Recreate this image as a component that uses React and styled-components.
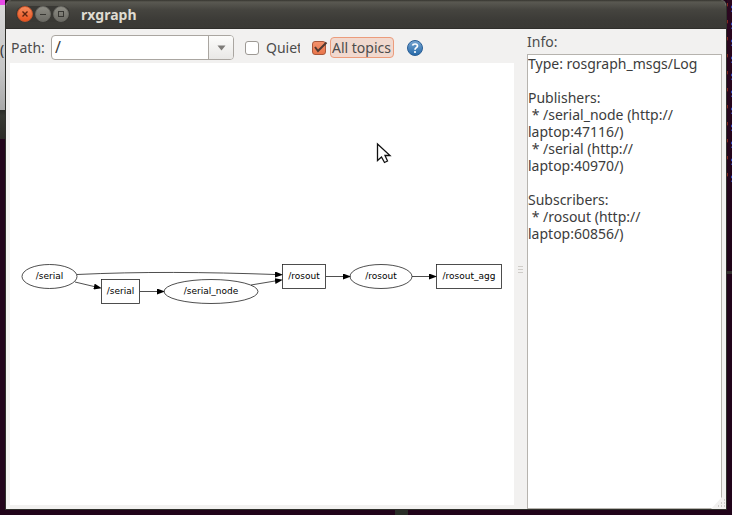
import React, { useState } from "react";
import styled, { createGlobalStyle, css } from "styled-components";

const Global = createGlobalStyle`
  *, *::before, *::after { box-sizing: border-box; }
  body {
    margin: 0;
    background: #21041a;
    color: #4c4c4c;
    font: 14px/17px "Noto Sans", "Open Sans", sans-serif;
  }
`;

const Desktop = styled.div`
  display: grid;
  grid-template-columns: 5px minmax(0, 1fr) 5px;
  grid-template-rows: minmax(0, 1fr) 5px;
  height: 100vh;
  overflow: hidden;
`;

const LeftEdge = styled.div`
  overflow: hidden;
  display: flex;
  flex-direction: column;
`;

const GreyPanel = styled.div`
  height: 110px;
  padding-top: 36px;
  background: linear-gradient(#d8d8d8, #c6c6c6 60%, #a8a8a8);
  border-top: 5px solid #e64be6;
  color: #333;
`;

const DarkPanel = styled.div`
  height: 29px;
  background: linear-gradient(#2a2b26, #363731 20%, #2b2a26);
`;

const Terminal = styled.div`
  overflow: hidden;
  background: linear-gradient(#2b0720, #1f0318 271px, #33302e 271px, #33302e 274px, #21041a 274px);
  color: #86b0ea;
  font: 12px/17px "DejaVu Sans Mono", monospace;
  white-space: pre;
`;

const TerminalLine = styled.div`
  margin-left: -4px;
`;

const Quote = styled.span`
  color: #d9a066;
`;

const BottomEdge = styled.div`
  grid-column: 1 / -1;
  display: flex;
  justify-content: center;
  padding-left: 70px;
`;

const BottomBlock = styled.div`
  width: 13px;
  background: #292d27;
`;

const Window = styled.main`
  display: flex;
  flex-direction: column;
  min-width: 0;
  background: #f2f1f0;
  border: 1px solid #2f302b;
  border-top: 0;
  border-radius: 6px 6px 0 0;
  overflow: hidden;
`;

const TitleBar = styled.header`
  flex: none;
  display: flex;
  align-items: center;
  gap: 11px;
  height: 29px;
  padding-left: 10px;
  background: linear-gradient(#35342f, #5a5952 2px, #45443f 10px, #3c3b37 20px, #3a3935);
  border-bottom: 1px solid #2f2e2b;
`;

const WindowControls = styled.div`
  display: flex;
  gap: 2px;
  padding: 0 1px;
  border-radius: 9px;
  background: #393834;
`;

const WindowButton = styled.button`
  display: flex;
  width: 16px;
  height: 16px;
  padding: 0;
  border: 1px solid ${(p) => (p.$close ? "#c9552b" : "#6b6a64")};
  border-radius: 50%;
  background: ${(p) =>
    p.$close ? "linear-gradient(#f58a5c, #e95420)" : "linear-gradient(#8d8c84, #6c6b65)"};
  color: ${(p) => (p.$close ? "#5b2410" : "#383733")};
`;

const Title = styled.h1`
  margin: 0;
  color: #dfdbd2;
  font-size: 14px;
  line-height: 17px;
  font-weight: 700;
`;

const Content = styled.div`
  flex: 1;
  min-height: 0;
  display: grid;
  grid-template-columns: minmax(0, 1fr) 13px minmax(0, 199px);
`;

const GraphPane = styled.section`
  display: flex;
  flex-direction: column;
  min-width: 0;
  padding: 0 0 4px 4px;
`;

const Toolbar = styled.form`
  flex: none;
  display: flex;
  align-items: center;
  height: 34px;
  padding: 4px 0 1px 1px;
`;

const PathLabel = styled.label`
  width: 40px;
`;

const ComboBox = styled.div`
  display: flex;
  width: 183px;
  height: 25px;
  border: 1px solid #aaa6a1;
  border-radius: 4px;
  overflow: hidden;
  background: #fff;
`;

const PathInput = styled.input`
  flex: 1;
  min-width: 0;
  padding: 0 3px;
  border: 0;
  outline: 0;
  background: transparent;
  color: #3c3c3c;
  font: inherit;
  font-size: 16px;
`;

const ComboButton = styled.button`
  display: flex;
  align-items: center;
  justify-content: center;
  width: 25px;
  padding: 0;
  border: 0;
  border-left: 1px solid #aaa6a1;
  background: linear-gradient(#fcfcfb, #e9e8e6);
`;

const CheckLabel = styled.label`
  display: flex;
  align-items: center;
  gap: ${(p) => (p.$focused ? 3 : 4)}px;
  margin-left: 10px;
`;

const CheckBox = styled.span`
  display: grid;
  width: 16px;
  height: 16px;

  & > * {
    grid-area: 1 / 1;
  }
`;

const CheckInput = styled.input`
  appearance: none;
  width: 14px;
  height: 14px;
  margin: 1px;
  border: 1px solid #9d9994;
  border-radius: 3px;
  background: #fff;

  &:checked {
    border-color: #a9583b;
    background: linear-gradient(#f4926c, #e9764c);
  }
`;

const CheckMark = styled.svg`
  pointer-events: none;
  overflow: visible;
`;

const CheckText = styled.span`
  width: ${(p) => p.$width}px;
  height: 21px;
  line-height: 19px;
  border: 1px solid transparent;
  border-radius: 4px;
  padding-left: 1px;
  overflow: hidden;
  white-space: nowrap;
  ${(p) =>
    p.$focused &&
    css`
      border-color: #ec9c7c;
      background: #f1d9cf;
    `}
`;

const HelpButton = styled.button`
  display: flex;
  margin-left: 12px;
  padding: 0;
  border: 0;
  background: none;
`;

const Canvas = styled.div`
  flex: 1;
  min-height: 0;
  background: #fff;
  overflow: hidden;
`;

const Graph = styled.svg`
  display: block;
  font: 9px "DejaVu Sans", sans-serif;
  text-anchor: middle;
`;

const Sash = styled.div`
  display: flex;
  flex-direction: column;
  align-items: center;
  justify-content: center;
  gap: 2px;
`;

const Grip = styled.span`
  width: 5px;
  height: 1px;
  background: #cfccc8;
`;

const InfoPane = styled.section`
  display: flex;
  flex-direction: column;
  min-width: 0;
  padding: 4px 4px 0 0;
`;

const InfoLabel = styled.label`
  flex: none;
  height: 21px;
  line-height: 17px;
`;

const InfoFrame = styled.div`
  flex: 1;
  display: grid;
  min-height: 0;
`;

const InfoText = styled.textarea`
  grid-area: 1 / 1;
  width: 100%;
  padding: 0;
  border: 1px solid #b6b3ae;
  border-radius: 0;
  outline: 0;
  resize: none;
  overflow: hidden;
  background: #fff;
  color: #3c3c3c;
  font: inherit;
`;

const ResizeGrip = styled.svg`
  grid-area: 1 / 1;
  place-self: end;
  margin-right: -4px;
`;

const details = `Type: rosgraph_msgs/Log

Publishers:
 * /serial_node (http://
laptop:47116/)
 * /serial (http://
laptop:40970/)

Subscribers:
 * /rosout (http://
laptop:60856/)`;

const nodes = [
  { x: 39.5, y: 213.5, rx: 27.5, ry: 12, label: "/serial" },
  { x: 201, y: 228.5, rx: 47, ry: 12, label: "/serial_node" },
  { x: 371, y: 213.5, rx: 31, ry: 12, label: "/rosout" },
];

const topics = [
  { x: 91.5, y: 216.5, w: 38, label: "/serial" },
  { x: 272.5, y: 201.5, w: 43, label: "/rosout" },
  { x: 426.5, y: 201.5, w: 65, label: "/rosout_agg" },
];

const edges = [
  "M67 211.500C130 208.500 195 209 265 211.500",
  "M65 219L84 223.500",
  "M130 228.500H147",
  "M241 222L265 218",
  "M316 213.500H333",
  "M402 213.500H419",
];

function TopicGraph() {
  return (
    <Graph width="504" height="442" role="img" aria-label="ROS computation graph">
      <defs>
        <marker id="arrow" markerUnits="userSpaceOnUse" markerWidth="9" markerHeight="6" refX="0" refY="3" orient="auto">
          <path d="M0 0L8 3L0 6Z" />
        </marker>
      </defs>
      <g fill="none" stroke="#222" strokeWidth="0.8">
        {edges.map((d) => (
          <path key={d} d={d} markerEnd="url(#arrow)" />
        ))}
        {nodes.map((n) => (
          <ellipse key={n.label} cx={n.x} cy={n.y} rx={n.rx} ry={n.ry} />
        ))}
        {topics.map((t) => (
          <rect key={t.label} x={t.x} y={t.y} width={t.w} height="24" />
        ))}
      </g>
      {nodes.map((n) => (
        <text key={n.label} x={n.x} y={n.y + 2.5}>{n.label}</text>
      ))}
      {topics.map((t) => (
        <text key={t.label} x={t.x + t.w / 2} y={t.y + 14.5}>{t.label}</text>
      ))}
      <path
        d="M367.500 81V97.500L371.500 94L374.500 99.500L377.500 98L375 92.500H380Z"
        fill="#fff"
        stroke="#111"
        strokeWidth="1.3"
      />
    </Graph>
  );
}

function Check({ label, width, focused, initial }) {
  const [on, setOn] = useState(initial);
  return (
    <CheckLabel $focused={focused}>
      <CheckBox>
        <CheckInput type="checkbox" checked={on} onChange={(e) => setOn(e.target.checked)} />
        {on && (
          <CheckMark width="16" height="16" viewBox="0 0 16 16">
            <path d="M4 7L7 11L15.500 2.500" fill="none" stroke="#503a32" strokeWidth="2" />
          </CheckMark>
        )}
      </CheckBox>
      <CheckText $width={width} $focused={focused}>{label}</CheckText>
    </CheckLabel>
  );
}

export default function App() {
  const [path, setPath] = useState("/");
  return (
    <>
      <Global />
      <Desktop>
        <LeftEdge>
          <GreyPanel>(</GreyPanel>
          <DarkPanel />
        </LeftEdge>
        <Window>
          <TitleBar>
            <WindowControls>
              <WindowButton $close aria-label="Close">
                <svg width="14" height="14" fill="none" stroke="currentColor" strokeWidth="1.4">
                  <path d="M4.500 4.500L9.500 9.500M9.500 4.500L4.500 9.500" />
                </svg>
              </WindowButton>
              <WindowButton aria-label="Minimize">
                <svg width="14" height="14" fill="none" stroke="currentColor">
                  <path d="M4 7.500H10" />
                </svg>
              </WindowButton>
              <WindowButton aria-label="Maximize">
                <svg width="14" height="14" fill="none" stroke="currentColor">
                  <rect x="4.500" y="4.500" width="5" height="5" />
                </svg>
              </WindowButton>
            </WindowControls>
            <Title>rxgraph</Title>
          </TitleBar>
          <Content>
            <GraphPane>
              <Toolbar onSubmit={(e) => e.preventDefault()}>
                <PathLabel htmlFor="path">Path:</PathLabel>
                <ComboBox>
                  <PathInput id="path" value={path} onChange={(e) => setPath(e.target.value)} />
                  <ComboButton type="button" aria-label="Show paths">
                    <svg width="9" height="6">
                      <path d="M0.500 0.500H8.500L4.500 5.500Z" fill="#7d7b78" />
                    </svg>
                  </ComboButton>
                </ComboBox>
                <Check label="Quiet" width={37} initial={false} />
                <Check label="All topics" width={64} focused initial />
                <HelpButton type="button" aria-label="Help">
                  <svg width="18" height="18" viewBox="0 0 18 18">
                    <defs>
                      <linearGradient id="help" x2="0" y2="1">
                        <stop stopColor="#78a6d2" />
                        <stop offset="1" stopColor="#2468a8" />
                      </linearGradient>
                    </defs>
                    <circle cx="9" cy="9" r="7.500" fill="url(#help)" stroke="#2b5f96" />
                    <path d="M6.500 6.500C7 4.500 11.500 4.300 11.500 7C11.500 8.700 9 8.700 9 10.800" fill="none" stroke="#fff" strokeWidth="1.700" />
                    <circle cx="9" cy="13" r="1.100" fill="#fff" />
                  </svg>
                </HelpButton>
              </Toolbar>
              <Canvas>
                <TopicGraph />
              </Canvas>
            </GraphPane>
            <Sash>
              <Grip />
              <Grip />
              <Grip />
            </Sash>
            <InfoPane>
              <InfoLabel htmlFor="info">Info:</InfoLabel>
              <InfoFrame>
                <InfoText id="info" readOnly spellCheck={false} value={details} />
                <ResizeGrip width="15" height="12">
                  <path d="M0 12L11 0H15V12Z" fill="#f2f1f0" />
                  <path d="M13 3h1M10 6h1M13 6h1M7 9h1M10 9h1M13 9h1" stroke="#aaa7a2" />
                </ResizeGrip>
              </InfoFrame>
            </InfoPane>
          </Content>
        </Window>
        <Terminal>
          {Array.from({ length: 11 }, (_, i) => (
            <TerminalLine key={i}>
              <Quote>'</Quote>s
            </TerminalLine>
          ))}
        </Terminal>
        <BottomEdge>
          <BottomBlock />
        </BottomEdge>
      </Desktop>
    </>
  );
}
